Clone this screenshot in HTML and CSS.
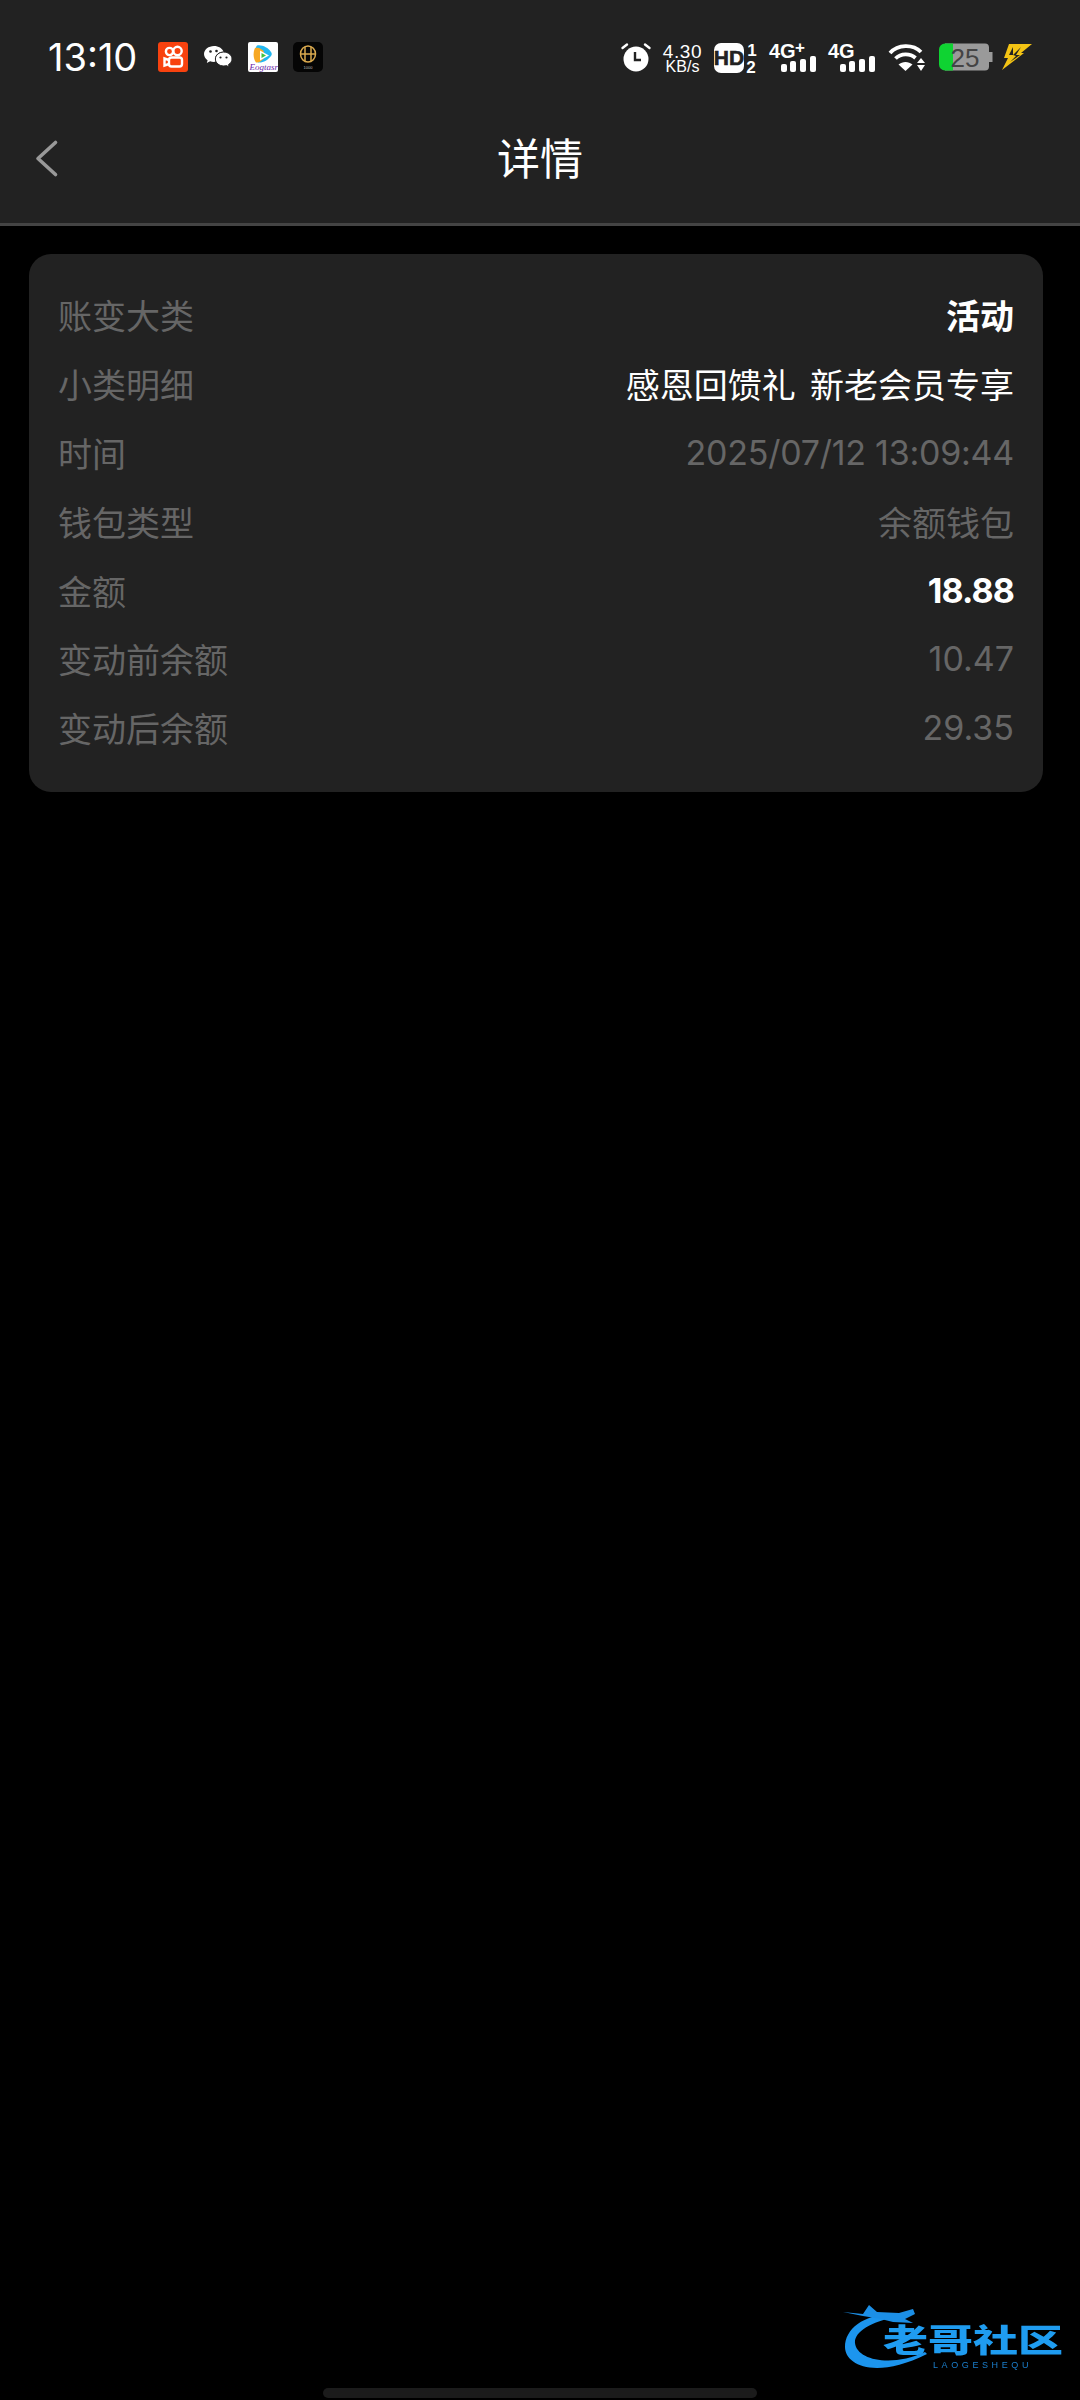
FILE: index.html
```html
<!DOCTYPE html>
<html lang="zh-CN">
<head>
    <meta charset="UTF-8">
    <meta name="viewport" content="width=device-width, initial-scale=1.0">
    <title>详情</title>
    <link rel="stylesheet" href="styles.css">
</head>
<body>
    <header class="top">
        <div class="status">
            <div class="status-left">
                <span class="clock">13:10</span>
                <!-- 通知图标 -->
                <svg class="app-icon" width="30" height="30" viewBox="0 0 30 30">
                    <rect width="30" height="30" rx="3" fill="#f8420f"/>
                    <g fill="none" stroke="#fff" stroke-width="2.4">
                        <circle cx="11.5" cy="9.5" r="3.6"/>
                        <circle cx="19.5" cy="9" r="4.2"/>
                        <rect x="11" y="15.5" width="13" height="9" rx="2.5"/>
                        <path d="M11 18 6.5 16.5v7L11 22"/>
                    </g>
                </svg>
                <svg class="app-icon wechat" width="30" height="30" viewBox="0 0 30 30">
                    <path d="M11 4C5.5 4 1 7.600 1 12c0 2.500 1.400 4.700 3.600 6.200L3.800 21l3.300-1.700c1.200.4 2.500.6 3.900.6.500 0 1 0 1.500-.1-.3-.8-.5-1.700-.5-2.600C12 13 15.800 9.800 20.600 9.800 19.400 6.400 15.500 4 11 4z" fill="#fff"/>
                    <path d="M29 17c0-3.900-3.800-7-8.300-7S12.400 13.100 12.400 17s3.800 7 8.300 7c1 0 1.900-.1 2.800-.4l2.700 1.500-.7-2.500C27.700 21.300 29 19.300 29 17z" fill="#fff" stroke="#222" stroke-width="1"/>
                    <circle cx="7.500" cy="9.500" r="1.300" fill="#222"/>
                    <circle cx="13.500" cy="9" r="1.300" fill="#222"/>
                    <circle cx="17.500" cy="15.500" r="1.100" fill="#222"/>
                    <circle cx="23.500" cy="15.500" r="1.100" fill="#222"/>
                </svg>
                <svg class="app-icon" width="30" height="30" viewBox="0 0 30 30">
                    <rect width="30" height="30" rx="2" fill="#fff"/>
                    <path d="M9 3.500c5-1 11 2 14 6.500 1 1.500 1 2.500 0 4-3 4-8 7-13 6.500C6 17 6 7 9 3.500z" fill="#22b7f0"/>
                    <path d="M7 6c4-1 7 1 9 4v6c-2 3-5 5-8 4.500C5 17 5 10 7 6z" fill="#f7a823"/>
                    <path d="M12 8.500 21 13.500 12 18.500z" fill="#fff"/>
                    <path d="M13.500 11 18 13.500 13.500 16z" fill="#3fc13f"/>
                    <text class="app-scrawl" x="1.500" y="28">Eogtasr</text>
                </svg>
                <svg class="app-icon" width="30" height="30" viewBox="0 0 30 30">
                    <rect width="30" height="30" rx="5" fill="#050505"/>
                    <g fill="none" stroke="#d9a94e" stroke-width="1.500">
                        <ellipse cx="15" cy="12" rx="7.500" ry="8"/>
                        <path d="M12 5v14M18 5v14M8 12h14"/>
                    </g>
                    <text class="app-tiny" x="15" y="27" text-anchor="middle">1000</text>
                </svg>
            </div>
            <div class="status-right">
                <svg width="30" height="30" viewBox="0 0 30 30">
                    <circle cx="15" cy="17" r="12.500" fill="#fff"/>
                    <path d="M14 10v8h6" fill="none" stroke="#222" stroke-width="2.400"/>
                    <path d="M1.500 6 6 2.500M28.500 6 24 2.500" stroke="#fff" stroke-width="2.400" stroke-linecap="round"/>
                </svg>
                <div class="speed">
                    <span class="speed-num">4.30</span>
                    <span class="speed-unit">KB/s</span>
                </div>
                <svg class="hd" width="43" height="31" viewBox="0 0 43 31">
                    <rect y="1" width="30" height="30" rx="7" fill="#fff"/>
                    <text class="hd-label" x="15" y="23" text-anchor="middle">HD</text>
                    <text class="sim-num" x="38" y="14" text-anchor="middle">1</text>
                    <text class="sim-num" x="37" y="31" text-anchor="middle">2</text>
                </svg>
                <svg class="signal" width="47" height="30" viewBox="0 0 47 30">
                    <text class="net-label" x="0" y="16">4G</text>
                    <text class="net-plus" x="26" y="11">+</text>
                    <g fill="#fff">
                        <rect x="12" y="22" width="6" height="8" rx="2"/>
                        <rect x="21" y="19" width="6" height="11" rx="2"/>
                        <rect x="31" y="17" width="6" height="13" rx="2"/>
                        <rect x="41" y="14" width="6" height="16" rx="2"/>
                    </g>
                </svg>
                <svg class="signal" width="47" height="30" viewBox="0 0 47 30">
                    <text class="net-label" x="0" y="16">4G</text>
                    <g fill="#fff">
                        <rect x="12" y="22" width="6" height="8" rx="2"/>
                        <rect x="21" y="19" width="6" height="11" rx="2"/>
                        <rect x="31" y="17" width="6" height="13" rx="2"/>
                        <rect x="41" y="14" width="6" height="16" rx="2"/>
                    </g>
                </svg>
                <svg class="wifi" width="37" height="28" viewBox="0 0 37 28">
                    <g fill="none" stroke="#fff" stroke-width="3.800">
                        <path d="M2 10C10 1 25 1 33 9"/>
                        <path d="M7.500 15.500C13 10 22 10 27.500 15"/>
                    </g>
                    <path d="M10.500 21.500c4-3.500 10-3.500 14 0L17.500 28z" fill="#fff"/>
                    <path d="M29 20h8l-4-5zM29 22h8l-4 6z" fill="#fff"/>
                </svg>
                <svg class="battery" width="54" height="28" viewBox="0 0 54 28">
                    <path d="M6 .5h40a4 4 0 0 1 4 4V9h3.500v10H50v4.500a4 4 0 0 1-4 4H6z" fill="#9a9a9a"/>
                    <path d="M14 .5H6a6 6 0 0 0-6 6v15a6 6 0 0 0 6 6h8z" fill="#0fd332"/>
                    <text class="battery-num" x="26" y="23.500" text-anchor="middle">25</text>
                </svg>
                <svg class="bolt" width="30" height="26" viewBox="0 0 30 26">
                    <path d="M7 0H30L19 9H22L0 26 6 14H2zM11 3 7 11H11z" fill="#f4c414"/>
                    <path d="M19 3 11 11 14 12 8 18 18 11H14z" fill="#222"/>
                </svg>
            </div>
        </div>
        <nav class="nav">
            <div class="nav-side">
                <svg width="23" height="37" viewBox="0 0 23 37">
                    <path d="M20.500 2.500 3 18.500l17.500 16" fill="none" stroke="#999" stroke-width="3.600" stroke-linecap="round" stroke-linejoin="round"/>
                </svg>
            </div>
            <h1 class="nav-title">详情</h1>
            <div class="nav-side"></div>
        </nav>
    </header>

    <main class="content">
        <section class="card">
            <div class="row"><span class="label">账变大类</span><span class="value strong">活动</span></div>
            <div class="row"><span class="label">小类明细</span><span class="value light">感恩回馈礼 新老会员专享</span></div>
            <div class="row"><span class="label">时间</span><span class="value time">2025/07/12 13:09:44</span></div>
            <div class="row"><span class="label">钱包类型</span><span class="value">余额钱包</span></div>
            <div class="row"><span class="label">金额</span><span class="value strong amount">18.88</span></div>
            <div class="row"><span class="label">变动前余额</span><span class="value">10.47</span></div>
            <div class="row"><span class="label">变动后余额</span><span class="value">29.35</span></div>
        </section>
    </main>

    <div class="home-bar"></div>

    <!-- 社区水印 -->
    <div class="watermark">
        <svg class="dragon" width="150" height="70" viewBox="0 0 150 70">
            <path d="M50 8C20 10 2 24 2 42c0 18 30 33 82 7l-2-2C50 62 14 56 12 38 11 27 28 17 52 12z" fill="#1c95ee"/>
            <path d="M0 7 20 9 26 0 34 7 56 8 70 4 72 9 62 14 70 18 50 17 38 14 20 11z" fill="#1c8fe6"/>
        </svg>
        <span class="wm-name">老哥社区</span>
        <span class="wm-sub">LAOGESHEQU</span>
    </div>
</body>
</html>
```

FILE: styles.css
```css
* {
    box-sizing: border-box;
}
body {
    margin: 0;
    width: 1080px;
    height: 2400px;
    position: relative;
    overflow: hidden;
    display: flex;
    flex-direction: column;
    background-color: #000;
    font-family: "Inter", "Noto Sans CJK SC", sans-serif;
}
svg {
    overflow: visible;
}

/* 顶部状态栏和导航 */
.top {
    background-color: #222;
    border-bottom: 3px solid #444;
}
.status {
    display: flex;
    justify-content: space-between;
    align-items: center;
    padding: 42px 48px 20px;
    height: 92px;
}
.status-left,
.status-right {
    display: flex;
    align-items: center;
}
.status-left {
    gap: 15px;
}
.status-right {
    gap: 12px;
}
.clock {
    font-size: 38px;
    line-height: 30px;
    color: #fff;
    width: 95px;
}
.app-scrawl {
    font-family: "Liberation Serif", serif;
    font-style: italic;
    font-size: 9px;
    fill: #6b1fa8;
}
.app-tiny {
    font-family: "Liberation Sans", sans-serif;
    font-size: 4px;
    fill: #bbb;
}
.speed {
    display: flex;
    flex-direction: column;
    align-items: center;
    width: 39px;
    color: #fff;
    font-family: "Liberation Sans", sans-serif;
}
.speed-num {
    font-size: 19px;
    line-height: 19px;
    letter-spacing: 0.6px;
}
.speed-unit {
    font-size: 16px;
    line-height: 12px;
}
.hd-label {
    font-family: "Liberation Sans", sans-serif;
    font-weight: bold;
    font-size: 21px;
    fill: #222;
    stroke: #222;
    stroke-width: 0.6px;
}
.sim-num {
    font-family: "Liberation Sans", sans-serif;
    font-weight: bold;
    font-size: 17px;
    fill: #fff;
}
.net-label {
    font-family: "Liberation Sans", sans-serif;
    font-weight: bold;
    font-size: 20px;
    fill: #fff;
}
.net-plus {
    font-family: "Liberation Sans", sans-serif;
    font-weight: bold;
    font-size: 17px;
    fill: #fff;
}
.wifi {
    margin-left: 1px;
}
.battery {
    margin-left: 2px;
}
.battery-num {
    font-family: "Liberation Sans", sans-serif;
    font-size: 26px;
    fill: #444;
}
.bolt {
    margin-left: -3px;
}

.nav {
    display: grid;
    grid-template-columns: 1fr auto 1fr;
    align-items: center;
    height: 131px;
    padding-top: 2px;
}
.nav-side {
    display: flex;
    padding-left: 35px;
}
.nav-title {
    margin: 0;
    font-size: 43px;
    line-height: 56px;
    font-weight: 400;
    color: #fff;
}

/* 详情卡片 */
.content {
    flex: 1;
    padding: 28px 37px 0 29px;
}
.card {
    background-color: #222;
    border-radius: 22px;
    padding: 26px 29px 30px 29px;
}
.row {
    display: flex;
    justify-content: space-between;
    align-items: center;
    height: 68.9px;
    font-size: 34px;
}
.label,
.value {
    color: #666;
}
.value.light {
    color: #fff;
    word-spacing: 4.6px;
}
.value.strong {
    color: #fff;
    font-weight: 700;
}
.value.amount {
    letter-spacing: -0.9px;
}
.value.time {
    letter-spacing: -0.25px;
}

/* 底部手势条 */
.home-bar {
    width: 434px;
    height: 10px;
    margin: 0 auto 2px;
    border-radius: 5px;
    background-color: #1b1b1b;
}

.watermark {
    position: absolute;
    left: 843px;
    top: 2305px;
    width: 222px;
    height: 70px;
    filter: blur(0.5px);
}
.dragon {
    position: absolute;
    left: 0;
    top: 0;
}
.wm-name {
    position: absolute;
    left: 40px;
    top: 12px;
    font-family: "Noto Sans CJK SC", sans-serif;
    font-weight: 900;
    font-size: 45px;
    line-height: 44px;
    white-space: nowrap;
    color: #1f9cf0;
    transform: scaleY(0.7);
}
.wm-sub {
    position: absolute;
    left: 90px;
    top: 55px;
    font-family: "Liberation Sans", sans-serif;
    font-size: 9px;
    line-height: 10px;
    letter-spacing: 3.600px;
    color: #1b7fcc;
}
```
